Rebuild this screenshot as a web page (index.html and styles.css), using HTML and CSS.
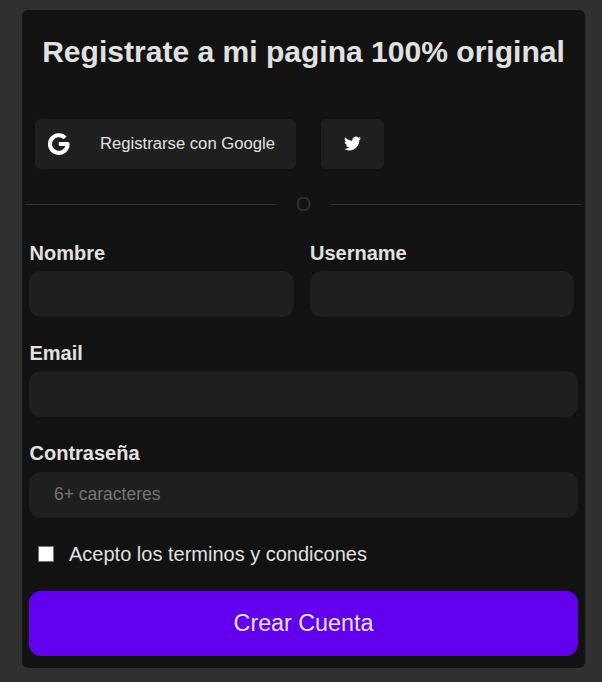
FILE: index.html
```html
<!DOCTYPE html>
<html lang="es">
<head>
<meta charset="utf-8">
<title>Registro</title>
<link rel="stylesheet" href="styles.css">
</head>
<body>
<main class="card">
  <h1 class="title">Registrate a mi pagina 100% original</h1>
  <div class="social">
    <button class="social-btn google" type="button">
      <svg class="google-icon" viewBox="0 0 22 22" aria-hidden="true"><path d="M17.1 4.9A8.8 8.8 0 1 0 19.6 11H10.8" fill="none" stroke="#fff" stroke-width="4.1" stroke-linejoin="round"/></svg>
      <span>Registrarse con Google</span>
    </button>
    <button class="social-btn twitter" type="button" aria-label="Twitter">
      <svg class="twitter-icon" viewBox="0 0 24 24" aria-hidden="true"><path fill="#fff" d="M23.953 4.57a10 10 0 01-2.825.775 4.958 4.958 0 002.163-2.723c-.951.555-2.005.959-3.127 1.184a4.92 4.92 0 00-8.384 4.482C7.69 8.095 4.067 6.13 1.64 3.162a4.822 4.822 0 00-.666 2.475c0 1.71.87 3.213 2.188 4.096a4.904 4.904 0 01-2.228-.616v.06a4.923 4.923 0 003.946 4.827 4.996 4.996 0 01-2.212.085 4.936 4.936 0 004.604 3.417 9.867 9.867 0 01-6.102 2.105c-.39 0-.779-.023-1.17-.067a13.995 13.995 0 007.557 2.209c9.053 0 13.998-7.496 13.998-13.985 0-.21 0-.42-.015-.63A9.935 9.935 0 0024 4.59z"/></svg>
    </button>
  </div>
  <div class="divider"><span>O</span></div>
  <form class="form">
    <div class="row">
      <label class="field"><span>Nombre</span><input type="text"></label>
      <label class="field"><span>Username</span><input type="text"></label>
    </div>
    <label class="field"><span>Email</span><input type="email"></label>
    <label class="field password"><span>Contraseña</span><input type="password" placeholder="6+ caracteres"></label>
    <label class="terms"><input type="checkbox"><span>Acepto los terminos y condicones</span></label>
    <button class="submit" type="button">Crear Cuenta</button>
  </form>
</main>
</body>
</html>
```
FILE: styles.css
```css
* { box-sizing: border-box; }
body {
  margin: 0;
  padding: 10px 17px 14px 22px;
  background: #303030;
  color: #e1e1e1;
  font-family: "Liberation Sans", Arial, sans-serif;
}
button, input { font-family: inherit; border: 0; }
.card {
  height: 658px;
  background: #121212;
  border-radius: 6px;
}
.title {
  margin: 0;
  padding-top: 23px;
  height: 109px;
  font-size: 30.05px;
  line-height: 37px;
  text-align: center;
}
.social { display: flex; gap: 25px; padding-left: 13px; }
.social-btn {
  display: flex;
  align-items: center;
  height: 50px;
  padding: 0;
  border-radius: 6px;
  background: #1f1f1f;
  color: #e1e1e1;
  font-size: 16.67px;
}
.google { width: 261px; padding-left: 13px; gap: 30px; }
.google-icon { width: 22px; height: 22px; }
.twitter { width: 63px; justify-content: center; }
.twitter-icon { width: 17px; height: 17px; margin-bottom: 2px; }
.divider {
  display: grid;
  grid-template-columns: 252px 1fr 252px;
  align-items: center;
  height: 24px;
  margin: 23px 3px 0;
  color: #303030;
  font-size: 20px;
  text-align: center;
}
.divider span { padding-top: 1px; }
.divider::before, .divider::after {
  content: "";
  height: 1px;
  background: #303030;
}
.form { padding: 25px 7px 0; }
.row { display: flex; gap: 16px; padding-right: 4px; }
.field {
  display: block;
  flex: 1;
  margin-bottom: 24px;
  font-size: 20px;
  font-weight: bold;
  line-height: 24px;
}
.field span { display: block; padding-left: 0.5px; }
.field input {
  display: block;
  width: 100%;
  height: 46px;
  margin-top: 6px;
  padding: 0 25px 2px;
  border-radius: 12px;
  background: #1f1f1f;
  color: #e1e1e1;
  font-size: 17.5px;
}
.field input::placeholder { color: #757575; }
.password input { margin-top: 7px; }
.terms { display: flex; align-items: center; gap: 15px; height: 24px; padding-left: 9px; font-size: 20px; }
.terms input {
  appearance: none;
  width: 16px;
  height: 16px;
  margin: 0;
  border: 1.5px solid #767676;
  background: #fff;
}
.submit {
  display: block;
  width: 100%;
  height: 65px;
  margin-top: 25px;
  padding: 0;
  border-radius: 12px;
  background: #6200ee;
  color: #e1e1e1;
  font-size: 23.3px;
}
```
